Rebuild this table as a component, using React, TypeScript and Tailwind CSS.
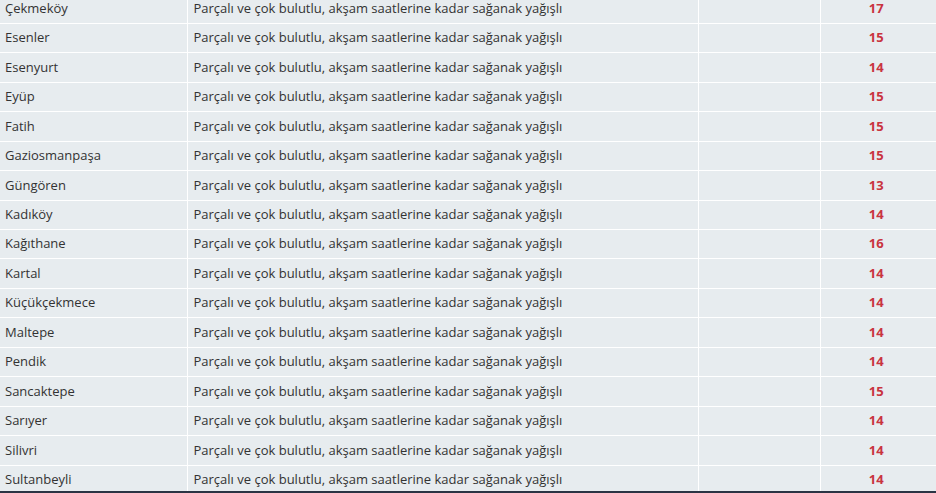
const rows: [string, number][] = [
  ['Çekmeköy', 17],
  ['Esenler', 15],
  ['Esenyurt', 14],
  ['Eyüp', 15],
  ['Fatih', 15],
  ['Gaziosmanpaşa', 15],
  ['Güngören', 13],
  ['Kadıköy', 14],
  ['Kağıthane', 16],
  ['Kartal', 14],
  ['Küçükçekmece', 14],
  ['Maltepe', 14],
  ['Pendik', 14],
  ['Sancaktepe', 15],
  ['Sarıyer', 14],
  ['Silivri', 14],
  ['Sultanbeyli', 14],
];

const desc = 'Parçalı ve çok bulutlu, akşam saatlerine kadar sağanak yağışlı';

export default function App() {
  return (
    <div className="w-[936px] h-[493px] flex flex-col overflow-hidden bg-[#e7ecef] font-['Open_Sans',sans-serif]">
      <div className="flex-1 overflow-hidden">
        <table className="w-full border-collapse -mt-[6.5px] table-fixed text-[13px] text-[#333]">
          <colgroup>
            <col className="w-[187px]" />
            <col className="w-[511px]" />
            <col className="w-[122px]" />
            <col />
          </colgroup>
          <tbody>
            {rows.map(([name, temp]) => (
              <tr key={name} className="h-[29.45px] border-t border-white">
                <td className="pl-[5px] border-r border-white whitespace-nowrap">{name}</td>
                <td className="pl-[6px] border-r border-white whitespace-nowrap">{desc}</td>
                <td className="border-r border-white"></td>
                <td className="text-center font-bold text-[#c9343f] pr-[4px]">{temp}</td>
              </tr>
            ))}
          </tbody>
        </table>
      </div>
      <div className="h-[2px] bg-[#2b3444]" />
    </div>
  );
}
